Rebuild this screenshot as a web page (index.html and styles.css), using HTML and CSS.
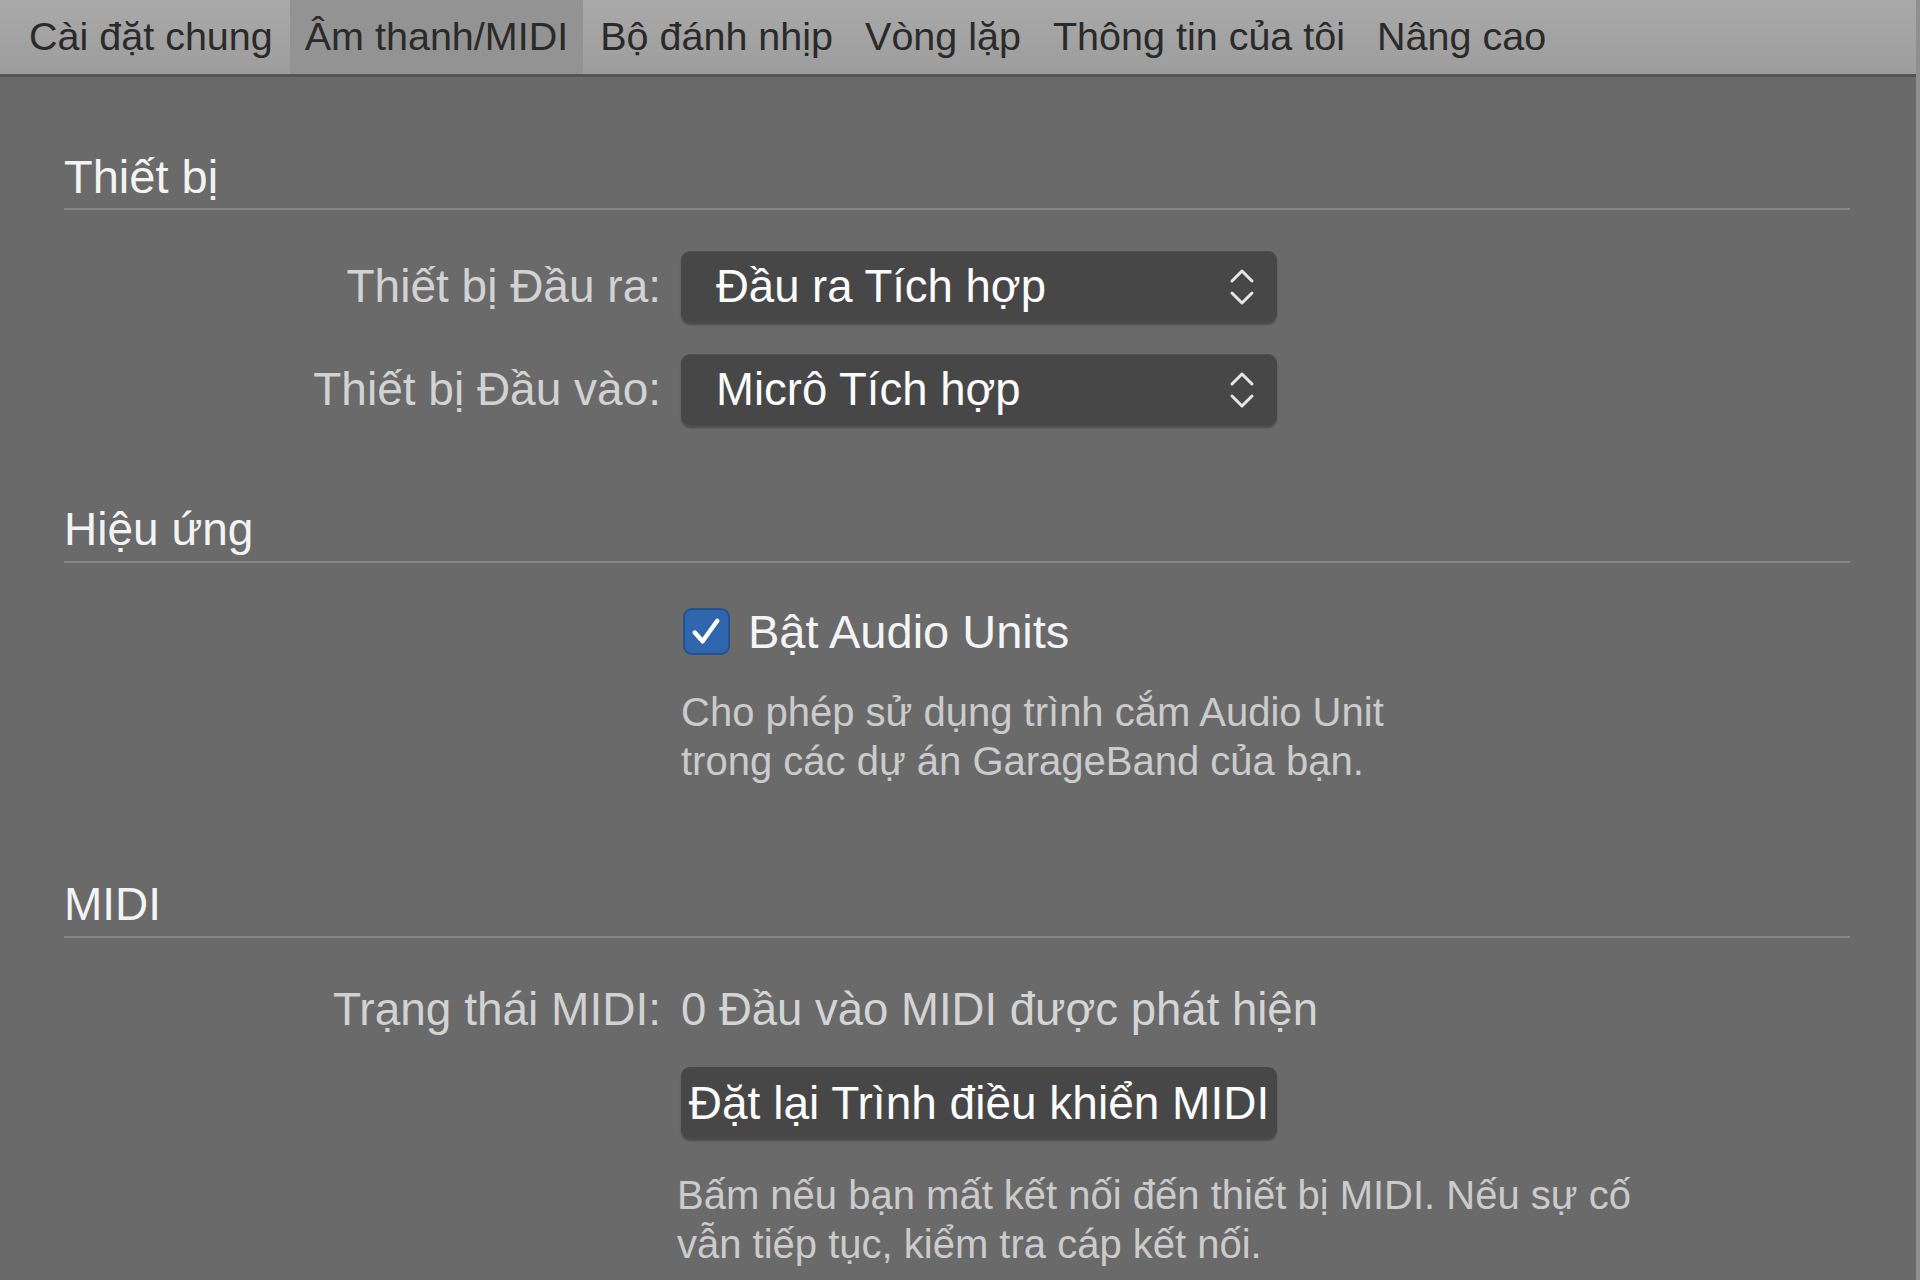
FILE: index.html
```html
<!DOCTYPE html>
<html lang="vi">
<head>
<meta charset="utf-8">
<title>Âm thanh/MIDI</title>
<link rel="stylesheet" href="styles.css">
</head>
<body>
<div class="window">
  <nav class="tabs">
    <div class="tab">Cài đặt chung</div>
    <div class="tab active">Âm thanh/MIDI</div>
    <div class="tab">Bộ đánh nhịp</div>
    <div class="tab">Vòng lặp</div>
    <div class="tab">Thông tin của tôi</div>
    <div class="tab">Nâng cao</div>
  </nav>
  <main class="content">
    <section class="section s-devices">
      <h2 class="section-head">Thiết bị</h2>
      <div class="form">
        <div class="row">
          <div class="label">Thiết bị Đầu ra:</div>
          <div class="popup">
            <span class="popup-text">Đầu ra Tích hợp</span>
            <svg class="chev" viewBox="0 0 26 40" width="26" height="40"><path d="M3 14 L13 4 L23 14 M3 26 L13 36 L23 26" fill="none" stroke="#e6e6e6" stroke-width="3" stroke-linecap="round" stroke-linejoin="round"/></svg>
          </div>
        </div>
        <div class="row">
          <div class="label">Thiết bị Đầu vào:</div>
          <div class="popup">
            <span class="popup-text">Micrô Tích hợp</span>
            <svg class="chev" viewBox="0 0 26 40" width="26" height="40"><path d="M3 14 L13 4 L23 14 M3 26 L13 36 L23 26" fill="none" stroke="#e6e6e6" stroke-width="3" stroke-linecap="round" stroke-linejoin="round"/></svg>
          </div>
        </div>
      </div>
    </section>

    <section class="section s-effects">
      <h2 class="section-head">Hiệu ứng</h2>
      <div class="form">
        <div class="row check-row">
          <div class="label"></div>
          <label class="check">
            <span class="box"><svg viewBox="0 0 48 48" width="47" height="47"><path d="M12 25 L20 34 L35 13" fill="none" stroke="#ffffff" stroke-width="4.5" stroke-linecap="round" stroke-linejoin="round"/></svg></span>
            <span class="check-text">Bật Audio Units</span>
          </label>
        </div>
        <div class="row desc-row">
          <div class="label"></div>
          <p class="desc">Cho phép sử dụng trình cắm Audio Unit<br>trong các dự án GarageBand của bạn.</p>
        </div>
      </div>
    </section>

    <section class="section s-midi">
      <h2 class="section-head">MIDI</h2>
      <div class="form">
        <div class="row status-row">
          <div class="label">Trạng thái MIDI:</div>
          <div class="value">0 Đầu vào MIDI được phát hiện</div>
        </div>
        <div class="row button-row">
          <div class="label"></div>
          <div class="button">Đặt lại Trình điều khiển MIDI</div>
        </div>
        <div class="row desc-row desc2-row">
          <div class="label"></div>
          <p class="desc">Bấm nếu bạn mất kết nối đến thiết bị MIDI. Nếu sự cố<br>vẫn tiếp tục, kiểm tra cáp kết nối.</p>
        </div>
      </div>
    </section>
  </main>
</div>
</body>
</html>
```

FILE: styles.css
```css
* { box-sizing: border-box; }
html, body {
  margin: 0;
  padding: 0;
  background: #6a6a6a;
}
body {
  font-family: "Liberation Sans", Arial, "Noto Sans", sans-serif;
  color: #f0f0f0;
  -webkit-font-smoothing: antialiased;
}
.window {
  width: 1920px;
  height: 1280px;
  overflow: hidden;
  background: #6a6a6a;
  border-right: 4px solid #8f8f8f;
}

/* Tabs */
.tabs {
  display: flex;
  align-items: stretch;
  gap: 2px;
  height: 77px;
  padding-left: 14px;
  background: linear-gradient(#a9a9a9, #9d9d9d);
  border-bottom: 3px solid #545454;
}
.tab {
  display: flex;
  align-items: center;
  padding: 0 15px 2px 15px;
  font-size: 39.5px;
  color: #2a2a2a;
  white-space: nowrap;
}
.tab.active {
  background: #939393;
}

/* Content */
.content {
  padding: 0 66px 0 64px;
}
.section-head {
  margin: 0;
  font-weight: normal;
  font-size: 46px;
  line-height: 53px;
  color: #f3f3f3;
  padding-bottom: 5px;
  border-bottom: 2px solid #868686;
}
.s-devices .section-head { margin-top: 73px; font-size: 47px; }
.s-effects .section-head { margin-top: 78px; }
.s-midi .section-head { margin-top: 92px; }

.form {
  display: flex;
  flex-direction: column;
}
.row {
  display: grid;
  grid-template-columns: 597px 596px;
  column-gap: 20px;
  align-items: center;
}
.label {
  text-align: right;
  font-size: 46px;
  line-height: 53px;
  color: #d2d2d2;
  white-space: nowrap;
}

.s-devices .form { margin-top: 41px; gap: 32px; }

.popup {
  height: 71px;
  border-radius: 9px;
  background: #474747;
  box-shadow: 0 3px 2px rgba(0,0,0,0.28), inset 0 1px 0 rgba(255,255,255,0.05);
  display: flex;
  align-items: center;
  justify-content: space-between;
  padding: 0 22px 0 35px;
}
.popup-text {
  font-size: 45.5px;
  color: #fbfbfb;
  white-space: nowrap;
}
.chev { display: block; }

/* Effects */
.s-effects .form { margin-top: 42px; }
.check {
  display: flex;
  align-items: center;
  gap: 18px;
  height: 53px;
}
.box {
  width: 47px;
  height: 47px;
  margin-left: 2px;
  border-radius: 9px;
  background: #2f66ae;
  border: 2px solid #24528f;
  display: flex;
  align-items: center;
  justify-content: center;
  overflow: hidden;
}
.box svg { display: block; flex: none; }
.check-text {
  font-size: 47px;
  color: #f4f4f4;
  white-space: nowrap;
}
.desc-row { margin-top: 30px; }
.desc {
  margin: 0;
  font-size: 40px;
  line-height: 49px;
  color: #cbcbcb;
  white-space: nowrap;
}

/* MIDI */
.s-midi .form { margin-top: 45px; }
.value {
  font-size: 45.5px;
  line-height: 53px;
  color: #d4d4d4;
  white-space: nowrap;
}
.button-row { margin-top: 31px; }
.button {
  height: 71px;
  border-radius: 9px;
  background: #474747;
  box-shadow: 0 3px 2px rgba(0,0,0,0.28);
  display: flex;
  align-items: center;
  justify-content: center;
  font-size: 46px;
  color: #fbfbfb;
  white-space: nowrap;
  overflow: visible;
}
.desc2-row { margin-top: 33px; }
.desc2-row .desc { margin-left: -4px; }
```
